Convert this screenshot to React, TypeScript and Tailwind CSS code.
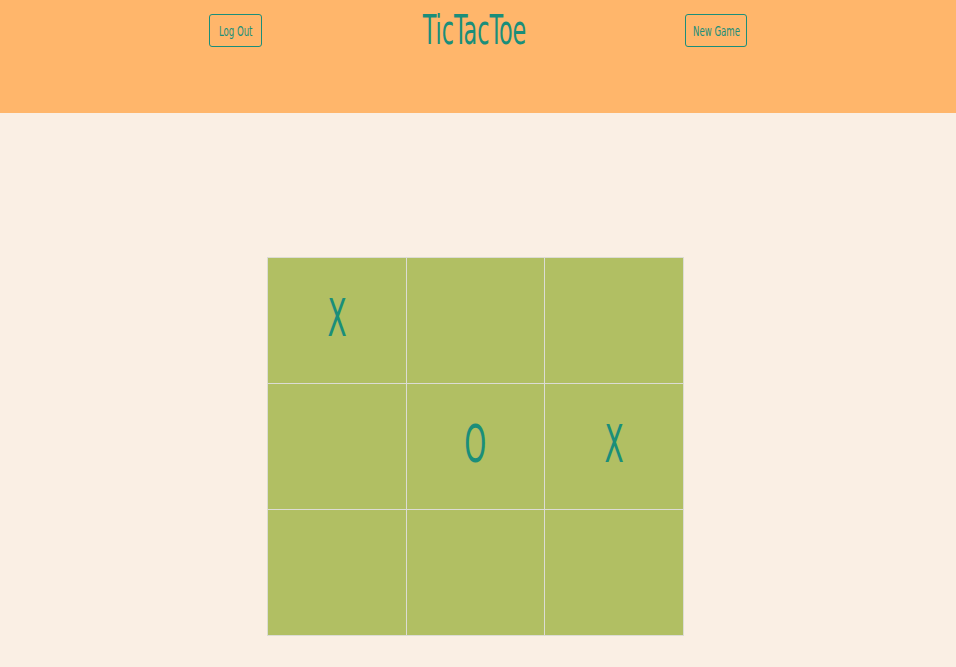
import React, { useState } from 'react';

const font = { fontFamily: '"Liberation Sans Narrow", "DejaVu Sans Condensed", sans-serif' };

export default function App() {
  const [board, setBoard] = useState<string[]>(['X', '', '', '', 'O', 'X', '', '', '']);

  const play = (i: number) => {
    if (board[i]) return;
    const next = [...board];
    next[i] = board.filter(Boolean).length % 2 === 0 ? 'X' : 'O';
    setBoard(next);
  };

  return (
    <div className="min-h-[667px] bg-[#faefe4] text-[#1a8e7a]" style={font}>
      <header className="h-[113px] bg-[#ffb66b] pt-[14px]">
        <div className="mx-auto flex w-[538px] items-start justify-between">
          <button className="flex h-[33px] w-[53px] items-center justify-center whitespace-nowrap rounded-[3px] border border-[#1a8e7a] text-[14px] font-extralight leading-none">
            <span className="inline-block scale-x-[0.68]">Log Out</span>
          </button>
          <h1 className="-mt-[8px] ml-[3px] flex w-[103px] justify-center whitespace-nowrap text-[40px] font-extralight leading-[48px]">
            <span className="inline-block scale-x-[0.62]">TicTacToe</span>
          </h1>
          <button className="flex h-[33px] w-[62px] items-center justify-center whitespace-nowrap rounded-[3px] border border-[#1a8e7a] text-[14px] font-extralight leading-none">
            <span className="inline-block scale-x-[0.68]">New Game</span>
          </button>
        </div>
      </header>

      <div className="pl-[267px] pt-[144px]">
        <div className="grid w-[417px] grid-cols-3 gap-px border border-[#dcdcd4] bg-[#dcdcd4]">
          {board.map((v, i) => (
            <div
              key={i}
              onClick={() => play(i)}
              className="flex h-[125px] items-center justify-center bg-[#b1bf63] text-[52px] font-extralight leading-none"
            >
              <span className="-mt-[6px] inline-block scale-x-[0.6]">{v}</span>
            </div>
          ))}
        </div>
      </div>
    </div>
  );
}
